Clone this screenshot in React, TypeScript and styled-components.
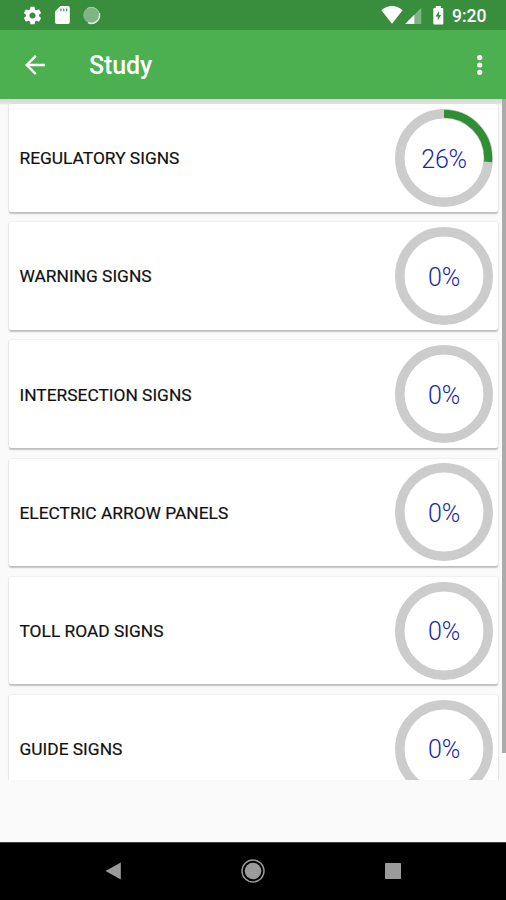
import React from 'react';
import styled, { createGlobalStyle } from 'styled-components';

const GlobalStyle = createGlobalStyle`
  * { box-sizing: border-box; }
  body { margin: 0; background: #fafafa; font-family: Roboto, "Liberation Sans", sans-serif; }
  svg { display: block; flex: none; }
`;

const Screen = styled.div`
  width: 506px;
  height: 900px;
  display: flex;
  flex-direction: column;
  overflow: hidden;
  background: #fafafa;
`;

const StatusBar = styled.header`
  flex: none;
  height: 30px;
  padding: 0 18px 0 22px;
  display: flex;
  align-items: center;
  justify-content: space-between;
  background: #388e3c;
  color: #fff;
`;

const StatusGroup = styled.div`
  display: flex;
  align-items: center;
`;

const Clock = styled.time`
  margin: 2px 0 0 8px;
  width: 36px;
  font-size: 17.5px;
  font-weight: 500;
  line-height: 28px;
  white-space: nowrap;
`;

const AppBar = styled.div`
  flex: none;
  height: 69px;
  padding: 0 14px 0 22px;
  display: flex;
  align-items: center;
  background: #4caf50;
  color: #fff;
`;

const Title = styled.h1`
  flex: 1;
  margin: 3px 0 0 40px;
  font-size: 25px;
  font-weight: 500;
  line-height: 32px;
  letter-spacing: -0.1px;
`;

const BarButton = styled.button`
  padding: 0;
  border: 0;
  background: none;
  color: inherit;
`;

const Body = styled.main`
  flex: 1;
  min-height: 0;
  display: flex;
  align-items: flex-start;
`;

const List = styled.ul`
  flex: 1;
  height: 681px;
  margin: 0;
  padding: 5px 3.5px 0 9px;
  list-style: none;
  overflow: hidden;
  background: linear-gradient(#d9d5d9, #e3dfe3 4px, #fafafa 6px);
`;

const Card = styled.li`
  height: 107.5px;
  margin-bottom: 10.7px;
  padding: 0 5px 0 10.5px;
  display: flex;
  align-items: center;
  justify-content: space-between;
  border-radius: 2px;
  background: #fff;
  box-shadow: 0 1.5px 1.5px rgba(0, 0, 0, 0.22), 0 0 2px rgba(0, 0, 0, 0.12);
`;

const CardLabel = styled.span`
  padding-top: 1px;
  font-size: 17.35px;
  line-height: 24px;
  color: #111;
  -webkit-text-stroke: 0.2px #111;
`;

const Gauge = styled.div`
  width: 98px;
  height: 98px;
  display: grid;
  place-items: center;
  & > * { grid-area: 1 / 1; }
`;

const Percent = styled.span`
  padding-top: 3.5px;
  font-size: 25px;
  font-weight: 300;
  line-height: 30px;
  letter-spacing: -0.3px;
  color: #1c28a4;
`;

const ScrollThumb = styled.div`
  width: 4.5px;
  height: 654px;
  background: #ababab;
`;

const NavBar = styled.nav`
  flex: none;
  height: 58px;
  padding: 0 104px 2px;
  display: flex;
  align-items: center;
  justify-content: space-between;
  border-top: 1px solid #444;
  background: #000;
`;

const sections = [
  { name: 'REGULATORY SIGNS', percent: 26 },
  { name: 'WARNING SIGNS', percent: 0 },
  { name: 'INTERSECTION SIGNS', percent: 0 },
  { name: 'ELECTRIC ARROW PANELS', percent: 0 },
  { name: 'TOLL ROAD SIGNS', percent: 0 },
  { name: 'GUIDE SIGNS', percent: 0 },
];

function ProgressGauge({ percent }: { percent: number }) {
  return (
    <Gauge>
      <svg width="98" height="98" viewBox="0 0 98 98" fill="none" strokeWidth="9.5">
        <circle cx="49" cy="49" r="44.2" stroke="#cccccc" />
        {percent > 0 && (
          <circle
            cx="49"
            cy="49"
            r="44.2"
            stroke="#2e8f35"
            strokeWidth="8"
            pathLength="100"
            strokeDasharray={`${percent + 0.4} 100`}
            transform="rotate(-90 49 49)"
          />
        )}
      </svg>
      <Percent>{percent}%</Percent>
    </Gauge>
  );
}

export default function App() {
  return (
    <>
      <GlobalStyle />
      <Screen>
        <StatusBar>
          <StatusGroup>
            <svg width="21" height="21" viewBox="0 0 24 24" fill="#fff">
              <path d="M19.43 12.98c.04-.32.07-.64.07-.98s-.03-.66-.07-.98l2.11-1.65c.19-.15.24-.42.12-.64l-2-3.46c-.12-.22-.39-.3-.61-.22l-2.49 1c-.52-.4-1.08-.73-1.69-.98l-.38-2.65C14.46 2.18 14.25 2 14 2h-4c-.25 0-.46.18-.49.42l-.38 2.65c-.61.25-1.17.59-1.69.98l-2.49-1c-.23-.09-.49 0-.61.22l-2 3.46c-.13.22-.07.49.12.64l2.11 1.65c-.04.32-.07.65-.07.98s.03.66.07.98l-2.11 1.65c-.19.15-.24.42-.12.64l2 3.46c.12.22.39.3.61.22l2.49-1c.52.4 1.08.73 1.69.98l.38 2.65c.03.24.24.42.49.42h4c.25 0 .46-.18.49-.42l.38-2.65c.61-.25 1.17-.59 1.69-.98l2.49 1c.23.09.49 0 .61-.22l2-3.46c.12-.22.07-.49-.12-.64l-2.11-1.65zM12 15.5c-1.93 0-3.5-1.57-3.5-3.5s1.57-3.5 3.5-3.5 3.5 1.57 3.5 3.5-1.57 3.5-3.5 3.5z" />
            </svg>
            <svg width="38" height="22" viewBox="0 0 38 22">
              <path fill="#fff" fillRule="evenodd" d="M17.5 2H25q1.8 0 1.8 1.8v14.4q0 1.8-1.8 1.8H13.800q-1.800 0-1.800-1.800V7.500zM17.300 4.400v2.800h1.200V4.400zM20.200 4.400v2.800h1.200V4.400zM23.100 4.400v2.800h1.200V4.400z" />
            </svg>
            <svg width="22" height="22" viewBox="0 0 22 22">
              <circle cx="10.400" cy="11.200" r="8.200" fill="#7fb582" />
              <path d="M6 4.600A8.200 8.200 0 0 1 18 8.500" stroke="#abd0ad" strokeWidth="1" fill="none" />
              <path d="M18.300 9A8.200 8.200 0 0 1 7 18.600" stroke="#e5f2e6" strokeWidth="1.400" fill="none" />
            </svg>
          </StatusGroup>
          <StatusGroup>
            <svg width="22" height="20" viewBox="0 0 22 20">
              <path d="M0.400 5.200Q11-3 21.600 5.200L11 18.700z" fill="#fff" />
            </svg>
            <svg width="19" height="20" viewBox="0 0 19 20">
              <path d="M18.300 2.700V19H2.200z" fill="#7fb582" />
              <path d="M11.300 9.800V19H2.200z" fill="#fff" />
            </svg>
            <svg width="22" height="20" viewBox="0 0 22 20">
              <path d="M13.800 1h5v2h1.500q1 0 1 1v14.600q0 1-1 1h-8q-1 0-1-1V4q0-1 1-1h1.500z" fill="#fff" />
              <path d="M17 6l-3.500 5.500h2.300v4l3.300-5.500h-2.100z" fill="#388e3c" />
            </svg>
            <Clock>9:20</Clock>
          </StatusGroup>
        </StatusBar>
        <AppBar>
          <BarButton aria-label="Back">
            <svg width="27" height="24" viewBox="0 0 27 24" fill="none" stroke="#fff" strokeWidth="2.400">
              <path d="M22.800 12H5M13.800 2.900L4.700 12l9.100 9.100" />
            </svg>
          </BarButton>
          <Title>Study</Title>
          <BarButton aria-label="More options">
            <svg width="24" height="24" viewBox="0 0 24 24" fill="#fff">
              <circle cx="11.700" cy="4.600" r="2.600" />
              <circle cx="11.700" cy="12" r="2.600" />
              <circle cx="11.700" cy="19.300" r="2.600" />
            </svg>
          </BarButton>
        </AppBar>
        <Body>
          <List>
            {sections.map((section) => (
              <Card key={section.name}>
                <CardLabel>{section.name}</CardLabel>
                <ProgressGauge percent={section.percent} />
              </Card>
            ))}
          </List>
          <ScrollThumb />
        </Body>
        <NavBar>
          <svg width="18" height="20" viewBox="0 0 18 20">
            <path d="M1.500 10L16.800 1.500v17z" fill="#9b9b9b" />
          </svg>
          <svg width="24" height="24" viewBox="0 0 24 24">
            <circle cx="12" cy="12" r="11" fill="none" stroke="#9b9b9b" strokeWidth="1.400" />
            <circle cx="12" cy="12" r="8.300" fill="#9b9b9b" />
          </svg>
          <svg width="18" height="18" viewBox="0 0 18 18">
            <rect x="1" y="1" width="16" height="16" rx=".8" fill="#9b9b9b" />
          </svg>
        </NavBar>
      </Screen>
    </>
  );
}
